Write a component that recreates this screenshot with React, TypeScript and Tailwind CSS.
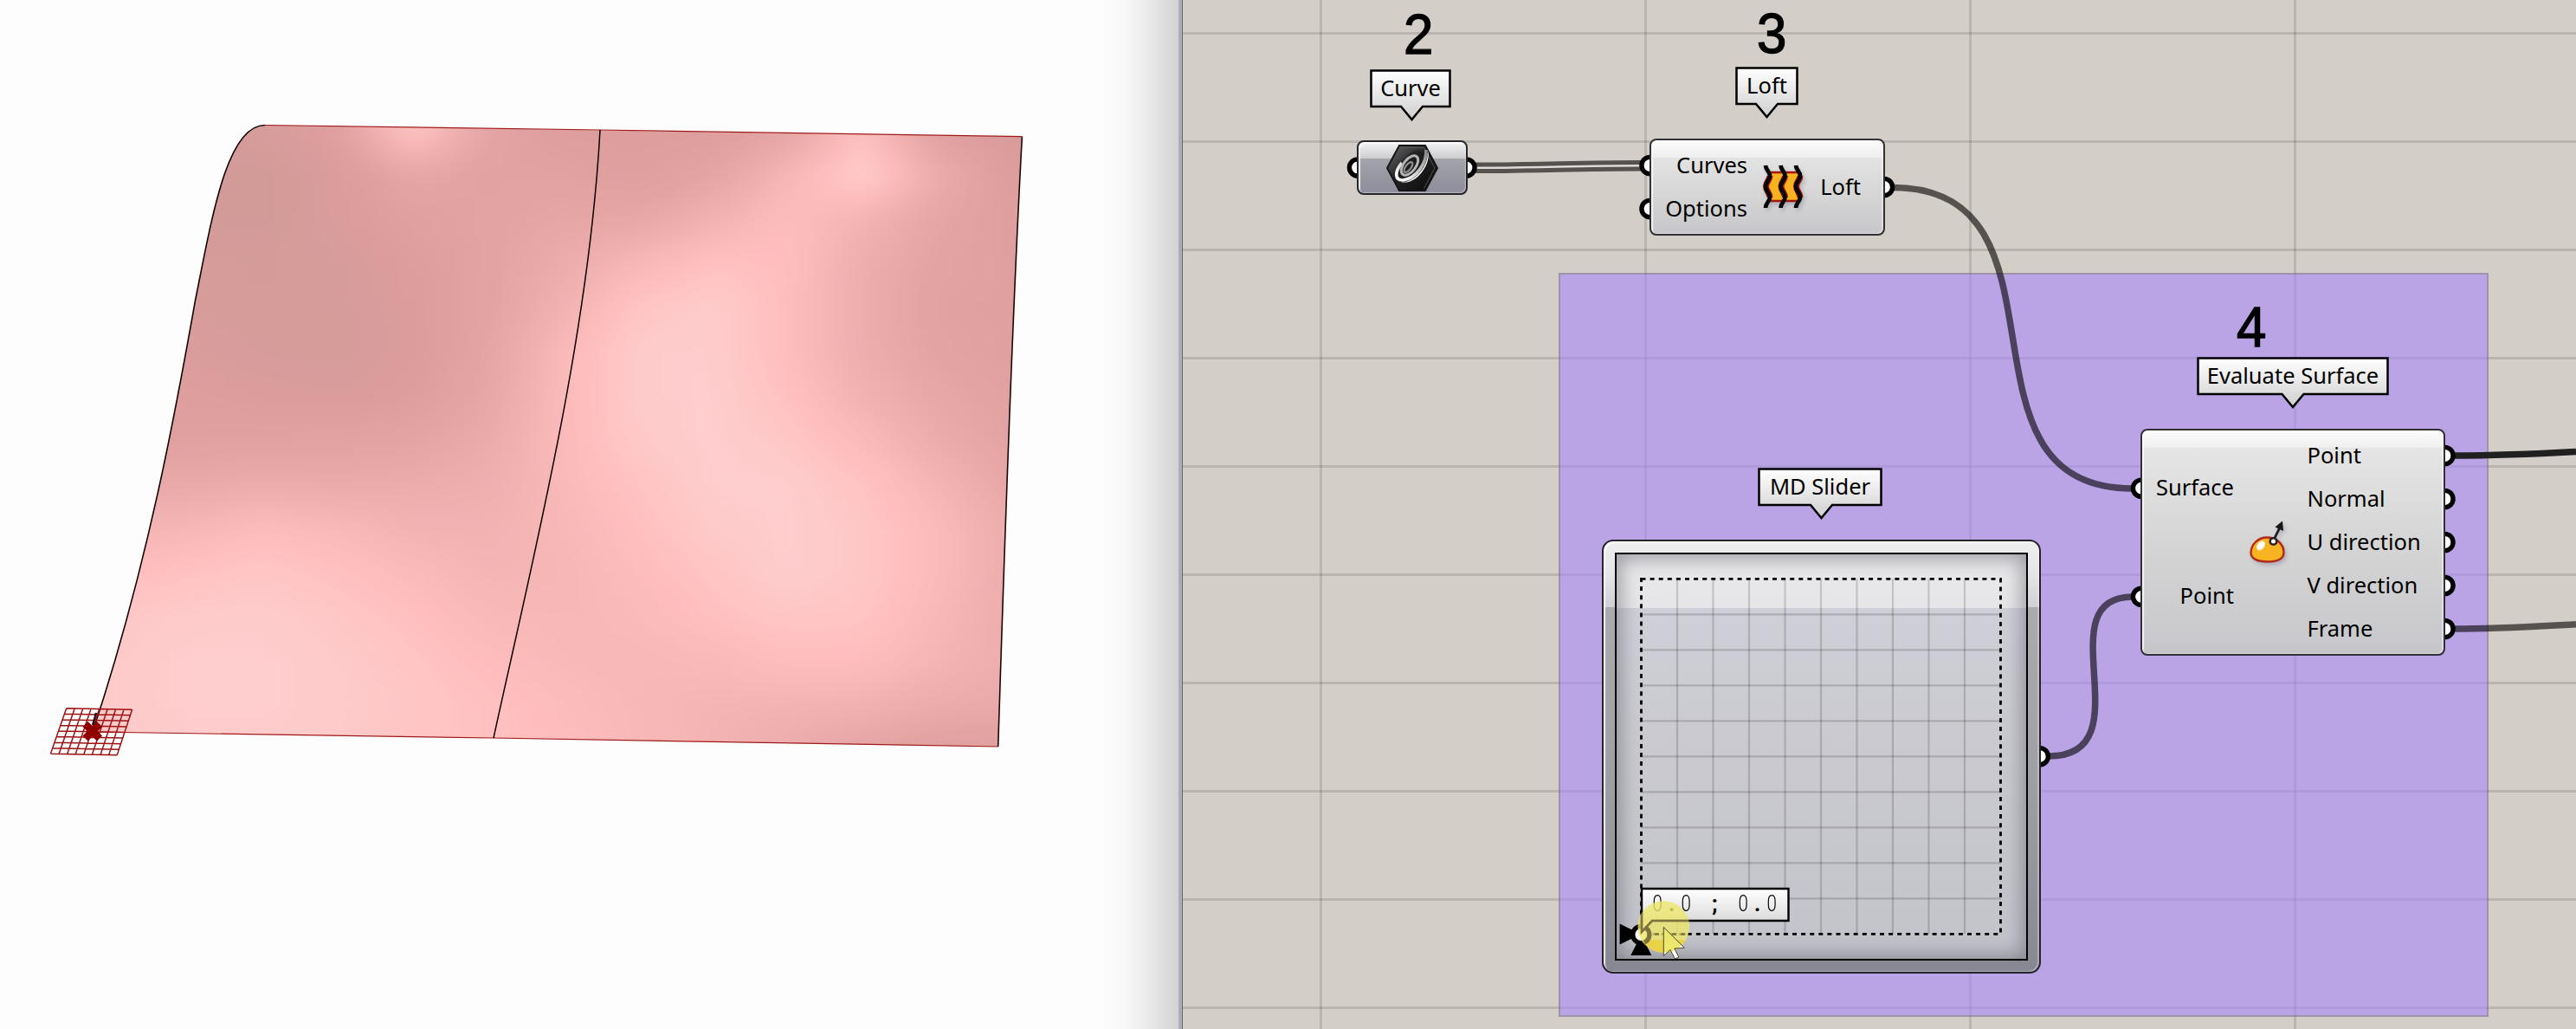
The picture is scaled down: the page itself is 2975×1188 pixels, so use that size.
import React from "react";

type Pt = [number, number];

/* ---------- Rhino-style viewport ---------- */

const FIELD: number[][] = [
  [0.5, 0.5, 1, 2.4, 9, 3.5, 2, 2, 2, 3.5, 8.5, 2.5, 1],
  [0.5, 0.5, 0.3, 1.5, 4, 3, 3, 2.2, 3.5, 6.8, 10, 5, 1.8],
  [0.6, 0.6, 0.4, 1.5, 2.6, 3.2, 4, 4, 6, 8, 6.4, 3.7, 2.3],
  [1, 0.9, 0.7, 1, 2, 3.2, 5, 7, 8.6, 8.2, 5.3, 3.3, 2.4],
  [1.2, 1, 0.8, 0.9, 1.7, 3.2, 6, 9, 9.9, 8, 5.2, 3, 2.4],
  [2, 1.6, 1, 0.9, 1.6, 3.5, 7.3, 9.8, 9.9, 8, 5.3, 3.3, 2.4],
  [2.2, 2.1, 1.7, 1.4, 2, 4, 7.5, 9.8, 10, 8.5, 6, 4.1, 2.8],
  [2.7, 2.7, 2.8, 3, 3.5, 4.8, 7.5, 9.5, 10, 9.3, 7.5, 5, 3.3],
  [4.5, 4.5, 5, 4.8, 5, 5.5, 7.3, 8.8, 10, 10, 8.8, 6.5, 4],
  [6.3, 6.8, 7.8, 7.2, 6.2, 6.2, 7, 8.3, 9.7, 10, 9.3, 7.5, 5],
  [8, 8.7, 9.2, 8.5, 7.5, 6.5, 6.8, 7.8, 9, 10, 9.3, 7.5, 5],
  [9.3, 9.7, 9.8, 9.3, 8.4, 7.2, 7, 7.4, 8.4, 9.2, 9, 7, 5],
  [9.5, 10, 10, 9.6, 9, 8, 7.2, 7, 7.3, 8, 8, 6.5, 5.2],
  [9.6, 10, 10, 9.7, 9.2, 8.5, 7.8, 7, 6.5, 6.3, 6, 5, 4.5],
  [9.5, 9.8, 9.8, 9.5, 9, 8.6, 8, 7.2, 6.3, 5, 3.5, 2.5, 2.5],
];
const RAMP: [number, number, number, number][] = [
  [0, 207, 154, 151],
  [2, 221, 158, 157],
  [4, 229, 166, 165],
  [6.5, 243, 181, 180],
  [8.2, 255, 190, 189],
  [10, 254, 205, 205],
];

function shade(v: number): string {
  for (let i = 1; i < RAMP.length; i++) {
    const a = RAMP[i - 1];
    const b = RAMP[i];
    if (v <= b[0] || i === RAMP.length - 1) {
      const t = Math.min(1, Math.max(0, (v - a[0]) / (b[0] - a[0])));
      const c = [1, 2, 3].map((k) => Math.round(a[k] + (b[k] - a[k]) * t));
      return `rgb(${c[0]},${c[1]},${c[2]})`;
    }
  }
  return "rgb(240,180,180)";
}

function sample(u: number, v: number): number {
  const cu = Math.min(FIELD[0].length - 1.001, Math.max(0, u));
  const cv = Math.min(FIELD.length - 1.001, Math.max(0, v));
  const i = Math.floor(cu);
  const j = Math.floor(cv);
  const fu = cu - i;
  const fv = cv - j;
  return (
    FIELD[j][i] * (1 - fu) * (1 - fv) +
    FIELD[j][i + 1] * fu * (1 - fv) +
    FIELD[j + 1][i] * (1 - fu) * fv +
    FIELD[j + 1][i + 1] * fu * fv
  );
}

const LEFT_EDGE = "M306 144.5C262 144.5 245 250 225.5 347C205 462 172 650 107 845";
const SEAM = "M693 150C680 390 614 650 570 852";
const RIGHT_EDGE = "M1152.7 862C1158 700 1167 400 1180.4 157.7";
const OUTLINE = `${LEFT_EDGE}L570 852L1152.7 862C1158 700 1167 400 1180.4 157.7Z`;

function LoftedSurface() {
  const step = 3;
  const w = 86.7 / step;
  const h = 51 / step;
  const cells: React.ReactElement[] = [];
  for (let r = -2; r < 15 * step + 2; r++) {
    for (let c = -2; c < 13 * step + 2; c++) {
      const x = 130 + c * w;
      const y = 151 + r * h;
      cells.push(
        <rect key={`${r}_${c}`} x={x - w / 2} y={y - h / 2} width={w + 1} height={h + 1} fill={shade(sample(c / step, r / step))} />,
      );
    }
  }
  const tl: Pt = [76.7, 817.8];
  const tr: Pt = [152.6, 819.2];
  const bl: Pt = [58.4, 870.3];
  const br: Pt = [135.2, 871.8];
  const mix = (a: Pt, b: Pt, t: number): Pt => [a[0] + (b[0] - a[0]) * t, a[1] + (b[1] - a[1]) * t];
  let mesh = "";
  for (let i = 0; i <= 8; i++) {
    const a = mix(tl, tr, i / 8);
    const b = mix(bl, br, i / 8);
    const c = mix(tl, bl, i / 8);
    const d = mix(tr, br, i / 8);
    mesh += `M${a[0]} ${a[1]}L${b[0]} ${b[1]}M${c[0]} ${c[1]}L${d[0]} ${d[1]}`;
  }
  return (
    <svg className="block h-full w-full" viewBox="0 0 1361 1188" fill="none">
      <defs>
        <clipPath id="surface">
          <path d={OUTLINE} />
        </clipPath>
        <filter id="soften" x="-5%" y="-5%" width="110%" height="110%">
          <feGaussianBlur stdDeviation="17 11" />
        </filter>
      </defs>
      <g clipPath="url(#surface)">
        <g filter="url(#soften)">{cells}</g>
      </g>
      <path d="M306 144.5L693 150L1180.4 157.7" stroke="#a01818" strokeWidth="1.200" />
      <path d="M107 845L570 852L1152.7 862" stroke="#a01818" strokeWidth="1.200" />
      <path d={LEFT_EDGE} stroke="#140505" strokeWidth="1.600" />
      <path d={SEAM} stroke="#0a0000" strokeWidth="1.500" />
      <path d={RIGHT_EDGE} stroke="#200404" strokeWidth="1.600" />
      <path d={mesh} stroke="#9d1212" strokeWidth="1.500" />
      <path d="M98.500 836L115 852.500M115 836L98.500 852.500" stroke="#900000" strokeWidth="8.500" />
      <path d="M107 837L111 823" stroke="#111" strokeWidth="2.200" />
    </svg>
  );
}

/* ---------- Graph canvas ---------- */

function Grid() {
  const xs = [1525.5, 1900.5, 2275.5, 2650.5];
  const ys = Array.from({ length: 10 }, (_, i) => 38.5 + i * 125);
  return (
    <svg className="absolute inset-0 h-full w-full" viewBox="1366 0 1609 1188">
      <g stroke="#000" strokeOpacity="0.12" strokeWidth="3">
        {xs.map((x) => (
          <path key={x} d={`M${x} 0V1188`} />
        ))}
        {ys.map((y) => (
          <path key={y} d={`M1366 ${y}H2975`} />
        ))}
      </g>
    </svg>
  );
}

const PORTS: Pt[] = [
  [1568, 193.5], [1693.5, 193.5], [1905.5, 191], [1905.5, 241], [2176, 216],
  [2473, 563.7], [2473, 688.8], [2355.8, 873.2],
  [2823.5, 526], [2823.5, 576], [2823.5, 626], [2823.5, 676], [2823.5, 726],
];

function Wires() {
  return (
    <svg className="absolute inset-0 h-full w-full" viewBox="1366 0 1609 1188" fill="none">
      <g stroke="#000" strokeOpacity="0.6" strokeWidth="7.500">
        <path d="M2186 216.500C2407 217 2242 564 2463 564" />
        <path d="M2366 873C2480 873 2360 689 2463 689" />
        <path d="M2834 726C2880 726 2930 723 2975 720.700" />
        <path strokeWidth="5" d="M1704 190C1780 190 1820 187.500 1895 187.500M1704 197.500C1780 197.500 1820 195 1895 195" />
      </g>
      <path stroke="#fff" strokeOpacity="0.35" strokeWidth="1.500" d="M1704 193.700C1780 193.700 1820 191.200 1895 191.200" />
      <path d="M2834 526C2880 526 2930 524 2975 521.500" stroke="#202020" strokeWidth="7.500" />
      {PORTS.map(([x, y]) => (
        <circle key={`${x}-${y}`} cx={x} cy={y} r="9.600" fill="#fff" stroke="#000" strokeWidth="5.400" />
      ))}
    </svg>
  );
}

function Callout({ className, width, tip, children }: { className: string; width: number; tip: number; children: React.ReactNode }) {
  const d = `M1.5 1.5H${width - 1.5}V43H${tip + 12.5}L${tip} 58L${tip - 12.5} 43H1.5Z`;
  return (
    <div className={`absolute h-[60px] ${className}`}>
      <svg className="absolute inset-0 h-full w-full" viewBox={`0 0 ${width} 60`}>
        <path d={d} fill="url(#tag)" stroke="#000" strokeWidth="2.500" />
      </svg>
      <div className="relative flex h-[44px] items-center justify-center text-[25.5px] leading-none whitespace-nowrap">
        {children}
      </div>
    </div>
  );
}

function CurveIcon() {
  return (
    <svg className="h-[56px] w-[62px]" viewBox="0 0 62 56" fill="none">
      <defs>
        <linearGradient id="hex" x1="0" y1="0" x2="1" y2="1">
          <stop offset="0" stopColor="#6b6b6d" />
          <stop offset="0.45" stopColor="#242425" />
          <stop offset="1" stopColor="#080808" />
        </linearGradient>
        <linearGradient id="ring" x1="0.9" y1="0" x2="0.2" y2="1">
          <stop offset="0" stopColor="#8a8a8a" />
          <stop offset="1" stopColor="#ffffff" />
        </linearGradient>
      </defs>
      <path d="M16 2H46L60 28L46 54H16L2 28Z" fill="url(#hex)" stroke="#151515" strokeWidth="2" />
      <path d="M17.500 4.500H44.500L57 28L44.500 51.500" stroke="#555558" strokeWidth="1" />
      <path d="M49 8C50 24 37 43 18 44C25 46 34 43 42 33C49 24 51 14 49 8Z" fill="#fff" />
      <ellipse cx="29.500" cy="26" rx="12" ry="21" transform="rotate(38 29.500 26)" fill="#1b1b1c" fillOpacity="0.6" />
      <path d="M47 7C48 22 36 40 20 42C11 42 10 33 19 22" stroke="url(#ring)" strokeWidth="3.600" />
      <ellipse cx="28" cy="25" rx="7" ry="13" transform="rotate(38 28 25)" stroke="#b4b4b5" strokeWidth="3" />
      <ellipse cx="26.500" cy="27" rx="3" ry="7" transform="rotate(38 26.500 27)" stroke="#8f8f90" strokeWidth="2.200" />
    </svg>
  );
}

function LoftIcon() {
  return (
    <svg className="h-[54px] w-[48px] drop-shadow-[2px_3px_2px_rgba(90,90,130,0.3)]" viewBox="0 0 48 54" fill="none">
      <path d="M8 10H43C46 16 38 20 38 26C38 33 43 36 43 43H8C11 36 4 32 4 26C4 20 10 16 8 10Z" fill="#f6b221" stroke="#a81408" strokeWidth="2.400" />
      {[0, 17.5, 35].map((dx) => (
        <g key={dx} transform={`translate(${dx} 0)`}>
          <path d="M9 14C9 19 4.500 21 4.500 26C4.500 32 9 33 9 39" stroke="#a81408" strokeWidth="7" />
          <path d="M4 2C4.500 8 9 9 9 14C9 19 4 21 4 26C4 32 9 33 9 39C9 44 4 45 4 51" stroke="#060606" strokeWidth="4.800" />
        </g>
      ))}
    </svg>
  );
}

function EvaluateIcon() {
  return (
    <svg className="h-[54px] w-[46px] drop-shadow-[2px_3px_2px_rgba(90,90,130,0.3)]" viewBox="0 0 46 54" fill="none">
      <path d="M2.500 38C3 28 11 20.500 21 20.500C32 20.500 40.500 28 40.500 38C40.500 45 33 48.500 21.500 48.500C10 48.500 2.500 45 2.500 38Z" fill="#f7b322" stroke="#b3281a" strokeWidth="2.400" />
      <ellipse cx="14" cy="30" rx="4.200" ry="6" transform="rotate(38 14 30)" fill="#fff3d6" />
      <ellipse cx="14" cy="29.500" rx="2.800" ry="4.500" transform="rotate(38 14 29.500)" fill="#fff" />
      <path d="M29 23L36 9" stroke="#222226" strokeWidth="2.800" />
      <path d="M39 1.500L40 13L30.500 8.500Z" fill="#15151a" />
      <circle cx="28.500" cy="25" r="3.800" fill="#fff" stroke="#2b2020" strokeWidth="2.600" />
    </svg>
  );
}

function MultiSlider() {
  const vx = Array.from({ length: 9 }, (_, i) => 1895.5 + 41.5 * (i + 1));
  const hy = Array.from({ length: 9 }, (_, i) => 668.3 + 41 * (i + 1));
  return (
    <div className="absolute top-[623px] left-[484px] h-[501px] w-[507px] rounded-[13px] border-[2px] border-[#24242a] bg-[linear-gradient(180deg,#efeff0_0%,#e4e4e6_8%,#cfcfd6_15.2%,#ababad_15.3%,#a2a2a8_45%,#96969f_75%,#878794_100%)] p-[13px] shadow-[inset_2px_2px_1px_rgba(255,255,255,0.85),inset_-2px_-1px_1px_rgba(255,255,255,0.3)]">
      <div className="h-full w-full border-[2.5px] border-black bg-[linear-gradient(180deg,#e9e9eb_0%,#e6e6e8_13.2%,#cfcfd8_13.3%,#cacad0_45%,#c3c3cb_100%)] shadow-[inset_0_0_22px_4px_rgba(85,85,98,0.55)]" />
      <svg className="absolute -top-[2px] -left-[2px] h-[501px] w-[507px] overflow-visible" viewBox="1850 623 507 501" fill="none">
        <g stroke="#000" strokeOpacity="0.16" strokeWidth="2.200">
          {vx.map((x) => (
            <path key={x} d={`M${x} 668V1078`} />
          ))}
          {hy.map((y) => (
            <path key={y} d={`M1895 ${y}H2311`} />
          ))}
        </g>
        <rect x="1895.500" y="668.300" width="415" height="410" stroke="#000" strokeWidth="2.800" strokeDasharray="5 5.100" />
        <path d="M1870.600 1066.500V1090.500L1895 1078.500ZM1883.300 1103H1907.300L1895.300 1079Z" fill="#000" />
        <circle cx="1895.300" cy="1079" r="9.600" fill="#fff" stroke="#000" strokeWidth="5.400" />
        <path d="M1896 1026H2065.500V1063H1908L1896 1076Z" fill="url(#tag)" stroke="#000" strokeWidth="2.400" />
      </svg>
      <div className="absolute top-[398px] left-[54px] flex h-[40px] items-center font-['Roboto','Liberation_Sans',sans-serif] text-[25px] leading-none">
        {"0.0 ; 0.0".split("").map((ch, i) => (
          <span
            key={i}
            className={`inline-block w-[16.5px] text-center whitespace-pre ${ch === "0" ? "scale-x-[0.82] font-light" : "font-bold"}`}
          >
            {ch}
          </span>
        ))}
      </div>
      <svg className="absolute -top-[2px] -left-[2px] h-[501px] w-[507px] overflow-visible" viewBox="1850 623 507 501" fill="none">
        <defs>
          <clipPath id="halo">
            <circle cx="1921.300" cy="1070" r="29.800" />
          </clipPath>
        </defs>
        <g clipPath="url(#halo)">
          <rect x="1890" y="1038" width="62" height="62" fill="#ede76c" fillOpacity="0.8" />
          <rect x="1890" y="1085" width="62" height="18" fill="#ecd03c" fillOpacity="0.8" />
          <path d="M1896 1026V1076L1908 1063H2065" stroke="#7c7440" strokeWidth="2.600" />
          <path d="M1901 1071.500A9.600 9.600 0 0 1 1899 1088" stroke="#7c7440" strokeWidth="5" />
          <path d="M1911 1078.500H1960" stroke="#7c7440" strokeWidth="2.600" strokeDasharray="5 5.100" />
        </g>
        <path d="M1921.300 1070.500V1103.500L1929 1096.500L1934.500 1107L1938.800 1105L1933.800 1095L1945.300 1094.300Z" fill="#fff" />
        <g clipPath="url(#halo)">
          <path d="M1921.300 1070.500V1103.500L1929 1096.500L1934.500 1107L1938.800 1105L1933.800 1095L1945.300 1094.300Z" fill="#ece86f" />
        </g>
        <path d="M1921.300 1070.500V1103.500L1929 1096.500L1934.500 1107L1938.800 1105L1933.800 1095L1945.300 1094.300Z" stroke="#3a3618" strokeWidth="0.900" />
      </svg>
    </div>
  );
}

function StepNumber({ className, children }: { className: string; children: React.ReactNode }) {
  return (
    <div className={`absolute scale-x-95 font-['Liberation_Sans',Arial,sans-serif] text-[65px] leading-none [-webkit-text-stroke:1.4px_black] ${className}`}>
      {children}
    </div>
  );
}

export default function App() {
  return (
    <div className="flex h-[1188px] w-[2975px] overflow-hidden bg-[#fdfdfd] font-['Noto_Sans','Open_Sans',sans-serif] text-black">
      <svg className="absolute h-0 w-0">
        <defs>
          <linearGradient id="tag" x1="0" y1="0" x2="0" y2="1">
            <stop offset="0" stopColor="#ffffff" />
            <stop offset="1" stopColor="#cfcfcf" />
          </linearGradient>
        </defs>
      </svg>

      <section className="relative h-full w-[1361px] shrink-0">
        <LoftedSurface />
        <div className="absolute top-0 right-0 h-full w-[90px] bg-[linear-gradient(90deg,rgba(0,0,0,0)_0%,rgba(0,0,0,0.02)_30%,rgba(0,0,0,0.07)_58%,rgba(0,0,0,0.12)_80%,rgba(0,0,0,0.17)_100%)]" />
      </section>
      <div className="h-full w-[5px] shrink-0 border-r border-[#66666a] bg-[#adadb5]" />

      <main className="relative h-full flex-1 overflow-hidden bg-[#d4cec8]">
        <Grid />
        <div className="absolute top-[315px] left-[434px] h-[859px] w-[1074px] border-2 border-[#786c96]/60 bg-[#a988fa]/60 bg-clip-padding" />
        <Wires />

        <StepNumber className="top-[7px] left-[254px]">2</StepNumber>
        <StepNumber className="top-[6px] left-[662px]">3</StepNumber>
        <StepNumber className="top-[345px] left-[1216px]">4</StepNumber>

        <Callout className="top-[80px] left-[216px] w-[94px]" width={94} tip={48.5}>Curve</Callout>
        <Callout className="top-[77px] left-[638px] w-[73px]" width={73} tip={36.5}>Loft</Callout>
        <Callout className="top-[540px] left-[664px] w-[144px]" width={144} tip={73.5}>MD Slider</Callout>
        <Callout className="top-[412px] left-[1171px] w-[222px]" width={222} tip={111}>Evaluate Surface</Callout>

        <div className="absolute top-[162px] left-[201px] flex h-[63px] w-[128px] items-center justify-center rounded-[8px] border-[2.5px] border-[#26262c] bg-[linear-gradient(180deg,#f4f4f5_0%,#cdcdd0_32%,#a3a3ab_33%,#9898a2_66%,#8d8d9d_100%)] shadow-[inset_2px_2px_1px_rgba(255,255,255,0.8),inset_-1px_-1px_1px_rgba(255,255,255,0.4)]">
          <CurveIcon />
        </div>

        <div className="absolute top-[160px] left-[539px] flex h-[112px] w-[272px] rounded-[8px] border-[2.5px] border-[#303036] bg-[linear-gradient(180deg,#fbfbfb_0%,#efefef_18%,#e3e3e3_19%,#d5d5d5_60%,#c7c7cb_100%)] pt-[3.5px] text-[25.5px] leading-none shadow-[inset_2px_2px_1px_rgba(255,255,255,0.8),inset_-2px_-1px_1px_rgba(255,255,255,0.4)]">
          <div className="flex w-[111px] flex-col items-end">
            <div className="flex h-[50px] items-center">Curves</div>
            <div className="flex h-[50px] items-center">Options</div>
          </div>
          <div className="flex h-[100px] flex-1 items-center pl-[17px]">
            <LoftIcon />
          </div>
          <div className="flex h-[100px] items-center pr-[26px]">Loft</div>
        </div>

        <div className="absolute top-[494.500px] left-[1106px] flex h-[262px] w-[352px] rounded-[8px] border-[2.5px] border-[#303036] bg-[linear-gradient(180deg,#fbfbfb_0%,#f0f0f0_7.500%,#e5e5e5_8%,#d5d5d5_50%,#c9c9cd_94%,#c3c3c6_100%)] pt-[4px] text-[25.5px] leading-none shadow-[inset_2px_2px_1px_rgba(255,255,255,0.8),inset_-2px_-1px_1px_rgba(255,255,255,0.4)]">
          <div className="flex w-[106px] flex-col items-end">
            <div className="flex h-[125px] items-center">Surface</div>
            <div className="flex h-[125px] items-center">Point</div>
          </div>
          <div className="flex h-[250px] w-[84.5px] items-center pt-[2px] pl-[17px]">
            <EvaluateIcon />
          </div>
          <div className="flex flex-col whitespace-nowrap">
            {["Point", "Normal", "U direction", "V direction", "Frame"].map((t) => (
              <div key={t} className="flex h-[50px] items-center">{t}</div>
            ))}
          </div>
        </div>

        <MultiSlider />
      </main>
    </div>
  );
}
